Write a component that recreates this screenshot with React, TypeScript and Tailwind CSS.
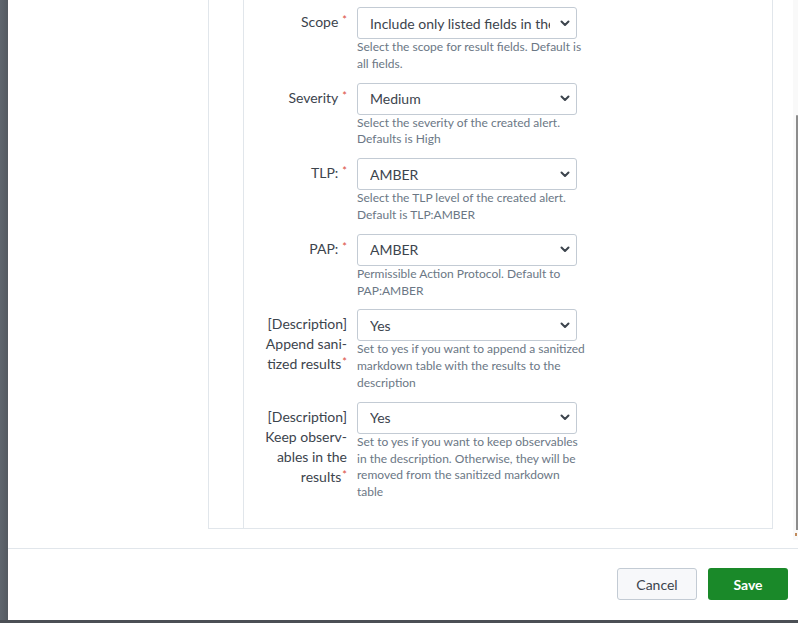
import React from 'react';

type Field = {
  label: string[];
  star: 'space' | 'tight';
  value: string;
  help: string[];
};

const fields: Field[] = [
  {
    label: ['Scope'],
    star: 'space',
    value: 'Include only listed fields in the results',
    help: ['Select the scope for result fields. Default is', 'all fields.'],
  },
  {
    label: ['Severity'],
    star: 'space',
    value: 'Medium',
    help: ['Select the severity of the created alert.', 'Defaults is High'],
  },
  {
    label: ['TLP:'],
    star: 'space',
    value: 'AMBER',
    help: ['Select the TLP level of the created alert.', 'Default is TLP:AMBER'],
  },
  {
    label: ['PAP:'],
    star: 'space',
    value: 'AMBER',
    help: ['Permissible Action Protocol. Default to', 'PAP:AMBER'],
  },
  {
    label: ['[Description]', 'Append sani-', 'tized results'],
    star: 'tight',
    value: 'Yes',
    help: [
      'Set to yes if you want to append a sanitized',
      'markdown table with the results to the',
      'description',
    ],
  },
  {
    label: ['[Description]', 'Keep observ-', 'ables in the', 'results'],
    star: 'tight',
    value: 'Yes',
    help: [
      'Set to yes if you want to keep observables',
      'in the description. Otherwise, they will be',
      'removed from the sanitized markdown',
      'table',
    ],
  },
];

function Chevron() {
  return (
    <svg width="10" height="7" viewBox="0 0 10 7" className="shrink-0">
      <path d="M1.5 1.5 L5 5 L8.5 1.5" fill="none" stroke="#3c444d" strokeWidth="2" strokeLinecap="round" strokeLinejoin="round" />
    </svg>
  );
}

function Row({ f }: { f: Field }) {
  const last = f.label.length - 1;
  return (
    <div className="flex items-start gap-[10px]">
      <div className="w-[84px] shrink-0 pt-[5px] text-right text-[14px] leading-[20px] text-[#3c444d]">
        {f.label.map((line, i) => (
          <div key={i} className="whitespace-nowrap">
            {line}
            {i === last && (
              <span className={`align-top text-[11px] leading-[16px] text-[#dc4e41] ${f.star === 'space' ? 'ml-[4px]' : 'ml-[1px]'}`}>*</span>
            )}
          </div>
        ))}
      </div>
      <div className="flex w-[232px] flex-col">
        <div className="flex h-[32px] w-[220px] items-center justify-between rounded-[3px] border border-[#c3cbd4] bg-white pl-[12px] pr-[6px]">
          <span className="w-[180px] overflow-hidden whitespace-nowrap text-[14px] text-[#3c444d]">{f.value}</span>
          <Chevron />
        </div>
        <div className="text-[12px] leading-[16.8px] text-[#6b7785]">
          {f.help.map((line, i) => (
            <div key={i} className="whitespace-nowrap">{line}</div>
          ))}
        </div>
      </div>
    </div>
  );
}

export default function App() {
  return (
    <div className="flex h-[623px] w-[798px] flex-col overflow-hidden bg-[#4b4f55] font-['Lato','Liberation_Sans',sans-serif]">
      <div className="flex h-[620px]">
        <div className="w-[8px] shrink-0 bg-gradient-to-r from-[#5f666e] to-[#545a61]" />
        <div className="relative flex flex-1 flex-col bg-white">
          <div className="relative h-[548px] overflow-hidden">
            <div className="ml-[200px] flex h-[529px] w-[565px] border-x border-b border-[#e1e6eb]">
              <div className="w-[35px] shrink-0 border-r border-[#e1e6eb]" />
              <div className="flex flex-col gap-[10px] pl-[19px] pt-[7px]">
                {fields.map((f, i) => (
                  <Row key={i} f={f} />
                ))}
              </div>
            </div>
            <div className="absolute right-0 top-0 h-[540px] w-[5px] bg-[#f9f9f9]">
              <div className="absolute right-0 top-[115px] h-[415px] w-[2px] rounded-t-[2px] bg-[#8c8c8c]" />
              <div className="absolute right-[1px] top-[533px] h-[3px] w-[2px] bg-[#c08a5a]" />
            </div>
          </div>
          <div className="flex flex-1 items-start justify-end gap-[11px] border-t border-[#e1e6eb] pr-[10px] pt-[19px]">
            <button className="h-[32px] w-[80px] rounded-[3px] border border-[#c3cbd4] bg-[#f7f8fa] text-[14px] text-[#3c444d]">
              Cancel
            </button>
            <button className="h-[32px] w-[80px] rounded-[3px] bg-[#1a8929] text-[14px] font-bold text-white">
              Save
            </button>
          </div>
        </div>
      </div>
    </div>
  );
}
